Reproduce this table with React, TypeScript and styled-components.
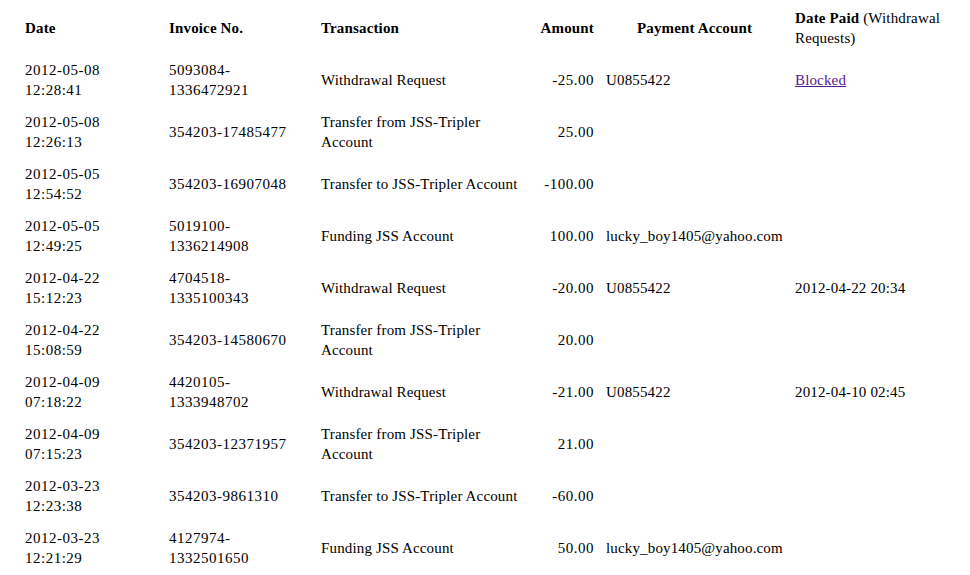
import React from "react";
import styled, { createGlobalStyle } from "styled-components";

const GlobalStyle = createGlobalStyle`
  html, body {
    margin: 0;
    background: #ffffff;
    font-family: "Liberation Serif", "Times New Roman", serif;
    color: #000000;
  }
`;

const Wrapper = styled.div`
  padding: 2px 0 0 19px;
`;

const Table = styled.table`
  border-collapse: collapse;
  table-layout: fixed;
  width: 942px;
  font-family: "Liberation Serif", "Times New Roman", serif;
  font-size: 15px;
  line-height: 20px;
  color: #000000;
  letter-spacing: 0.15px;
`;

const HeadCell = styled.th<{ align?: "left" | "right" | "center" }>`
  padding: 6px;
  font-weight: bold;
  text-align: ${p => p.align || "left"};
  vertical-align: middle;
`;

const Light = styled.span`
  font-weight: normal;
`;

const Cell = styled.td<{ align?: "left" | "right"; numeric?: boolean; tight?: boolean }>`
  padding: ${p => (p.tight ? "6px 16px 6px 6px" : "6px")};
  height: 40px;
  text-align: ${p => p.align || "left"};
  vertical-align: middle;
  letter-spacing: ${p => (p.numeric ? "0.5px" : "0.15px")};
`;

const Link = styled.a`
  color: #551a8b;
  text-decoration: underline;
`;

type Row = {
  date: string;
  time: string;
  invoice: string;
  transaction: string;
  amount: string;
  account?: string;
  paid?: string;
  blocked?: boolean;
};

const rows: Row[] = [
  { date: "2012-05-08", time: "12:28:41", invoice: "5093084-1336472921", transaction: "Withdrawal Request", amount: "-25.00", account: "U0855422", blocked: true },
  { date: "2012-05-08", time: "12:26:13", invoice: "354203-17485477", transaction: "Transfer from JSS-Tripler Account", amount: "25.00" },
  { date: "2012-05-05", time: "12:54:52", invoice: "354203-16907048", transaction: "Transfer to JSS-Tripler Account", amount: "-100.00" },
  { date: "2012-05-05", time: "12:49:25", invoice: "5019100-1336214908", transaction: "Funding JSS Account", amount: "100.00", account: "lucky_boy1405@yahoo.com" },
  { date: "2012-04-22", time: "15:12:23", invoice: "4704518-1335100343", transaction: "Withdrawal Request", amount: "-20.00", account: "U0855422", paid: "2012-04-22 20:34" },
  { date: "2012-04-22", time: "15:08:59", invoice: "354203-14580670", transaction: "Transfer from JSS-Tripler Account", amount: "20.00" },
  { date: "2012-04-09", time: "07:18:22", invoice: "4420105-1333948702", transaction: "Withdrawal Request", amount: "-21.00", account: "U0855422", paid: "2012-04-10 02:45" },
  { date: "2012-04-09", time: "07:15:23", invoice: "354203-12371957", transaction: "Transfer from JSS-Tripler Account", amount: "21.00" },
  { date: "2012-03-23", time: "12:23:38", invoice: "354203-9861310", transaction: "Transfer to JSS-Tripler Account", amount: "-60.00" },
  { date: "2012-03-23", time: "12:21:29", invoice: "4127974-1332501650", transaction: "Funding JSS Account", amount: "50.00", account: "lucky_boy1405@yahoo.com" }
];

const App = () => {
  return (
    <>
      <GlobalStyle />
      <Wrapper>
        <Table>
          <colgroup>
            <col style={{ width: 144 }} />
            <col style={{ width: 152 }} />
            <col style={{ width: 214 }} />
            <col style={{ width: 71 }} />
            <col style={{ width: 189 }} />
            <col style={{ width: 172 }} />
          </colgroup>
          <thead>
            <tr>
              <HeadCell>Date</HeadCell>
              <HeadCell>Invoice No.</HeadCell>
              <HeadCell>Transaction</HeadCell>
              <HeadCell align="right">Amount</HeadCell>
              <HeadCell align="center">Payment Account</HeadCell>
              <HeadCell>
                Date Paid <Light>(Withdrawal Requests)</Light>
              </HeadCell>
            </tr>
          </thead>
          <tbody>
            {rows.map((row, index) => (
              <tr key={`row-${index}`}>
                <Cell numeric tight>
                  {row.date} {row.time}
                </Cell>
                <Cell numeric tight>
                  {row.invoice}
                </Cell>
                <Cell>{row.transaction}</Cell>
                <Cell align="right" numeric>
                  {row.amount}
                </Cell>
                <Cell>{row.account}</Cell>
                <Cell>
                  {row.blocked ? <Link href="#">Blocked</Link> : row.paid}
                </Cell>
              </tr>
            ))}
          </tbody>
        </Table>
      </Wrapper>
    </>
  );
};

export default App;
